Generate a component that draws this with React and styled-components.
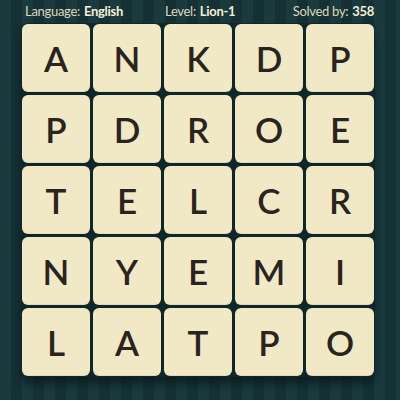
import React from "react";
import styled, { createGlobalStyle } from "styled-components";

const GlobalStyle = createGlobalStyle`
  html, body {
    margin: 0;
    padding: 0;
  }
  body {
    width: 400px;
    height: 400px;
    overflow: hidden;
    font-family: Lato, "Open Sans", sans-serif;
  }
`;

const rows = ["ANKDP", "PDROE", "TELCR", "NYEMI", "LATPO"];

const info = [
  { label: "Language:", value: "English" },
  { label: "Level:", value: "Lion-1" },
  { label: "Solved by:", value: "358" },
];

export default function App() {
  return (
    <>
      <GlobalStyle />
      <Page>
        <Header>
          {info.map((item) => (
            <InfoItem key={item.label}>
              <Label>{item.label}</Label>
              <Value>{item.value}</Value>
            </InfoItem>
          ))}
        </Header>
        <Board>
          {rows.join("").split("").map((letter, i) => (
            <Tile key={i}>{letter}</Tile>
          ))}
        </Board>
      </Page>
    </>
  );
}

const Page = styled.div`
  width: 400px;
  height: 400px;
  box-sizing: border-box;
  background-color: #173539;
  background-image: repeating-linear-gradient(
    90deg,
    #1a3a3e 0px,
    #1a3a3e 11px,
    #153135 11px,
    #153135 22px
  );
  display: flex;
  flex-direction: column;
  align-items: flex-start;
`;

const Header = styled.div`
  width: 100%;
  box-sizing: border-box;
  height: 22px;
  padding: 0 26px 0 25px;
  display: grid;
  grid-template-columns: 140px 1fr auto;
  align-items: center;
  font-size: 13px;
  letter-spacing: -0.3px;
`;

const InfoItem = styled.div`
  display: flex;
  gap: 4px;
  white-space: nowrap;
`;

const Label = styled.span`
  color: #ddd8bb;
  font-weight: 400;
`;

const Value = styled.span`
  color: #f4efd6;
  font-weight: 700;
`;

const Board = styled.div`
  margin: 2px 0 0 22px;
  display: grid;
  grid-template-columns: repeat(5, 68px);
  grid-auto-rows: 68px;
  gap: 3px;
  background: #0f272b;
  border-radius: 7px;
  box-shadow: 0 0 0 1px #0f272b, 0 7px 10px rgba(5, 20, 22, 0.7);
`;

const Tile = styled.div`
  background: #f1e9c6;
  border-radius: 6px;
  display: flex;
  align-items: center;
  justify-content: center;
  color: #2a2420;
  font-size: 35px;
  font-weight: 600;
  line-height: 1;
  box-shadow: inset 0 -1px 0 rgba(0, 0, 0, 0.06);
`;
